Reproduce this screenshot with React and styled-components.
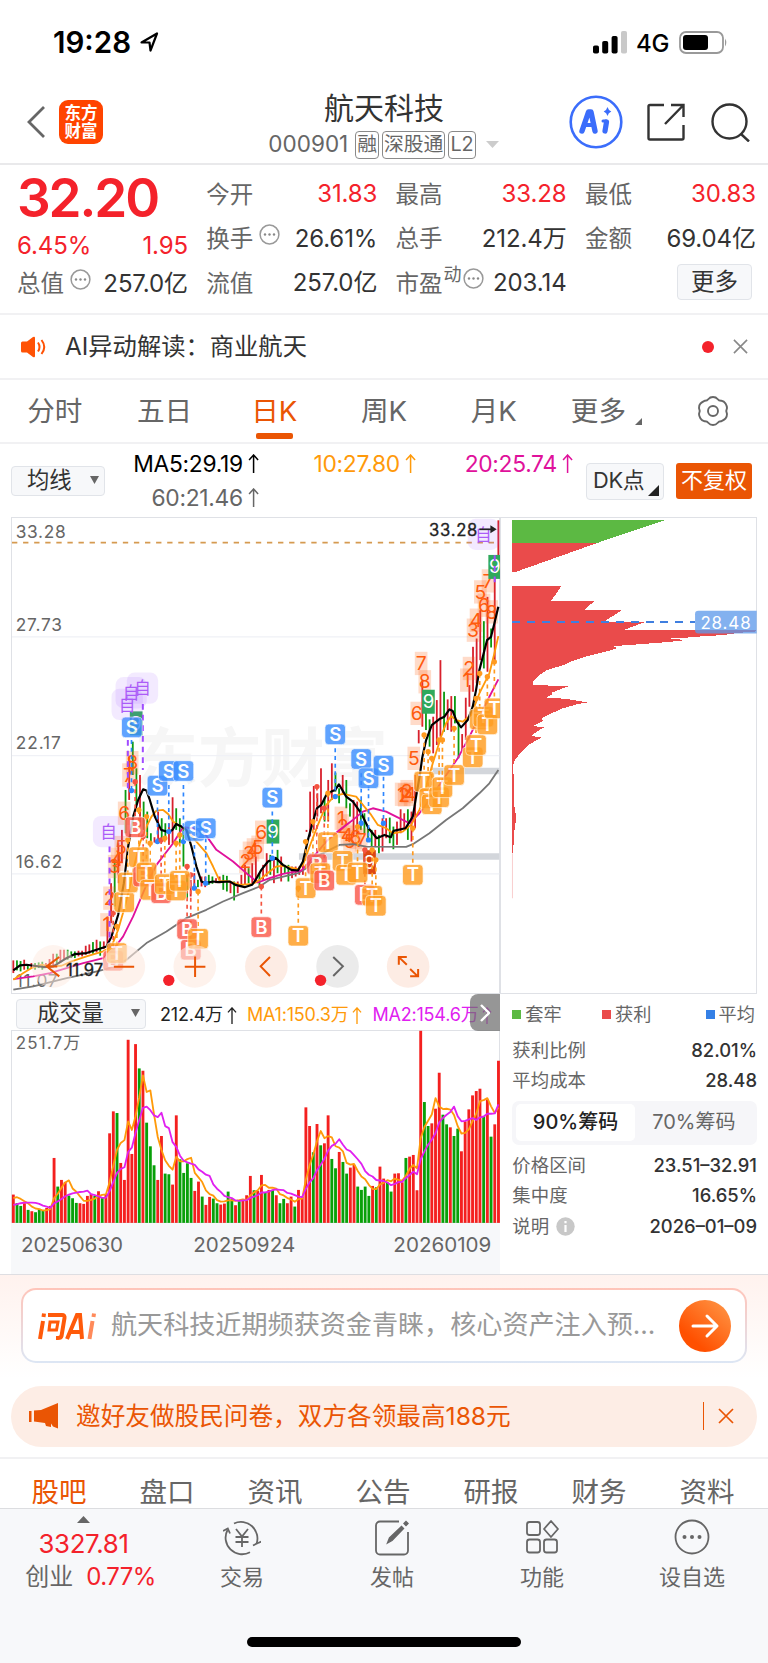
import React from "react";
import styled, { createGlobalStyle, css } from "styled-components";

const FONT = `Inter, "Noto Sans CJK SC", sans-serif`;
const C = {
  red: "#f4222b",
  orange: "#ea5504",
  text: "#333",
  sub: "#666",
  line: "#f1f1f3",
  pale: "#f7f8fa",
};

const Global = createGlobalStyle`
  * { box-sizing: border-box; }
  body { margin: 0; background: #fff; font-family: ${FONT}; color: ${C.text}; }
  svg { display: block; flex: none; }
  svg text { font-family: ${FONT}; }
`;

const Page = styled.div`
  width: 768px;
  height: 1663px;
  display: flex;
  flex-direction: column;
  overflow: hidden;
  background: #fff;
  line-height: 1;
  white-space: nowrap;
`;

/* ---------- status bar and header ---------- */

const StatusBar = styled.div`
  height: 84px;
  padding: 0 40px 0 53px;
  display: flex;
  align-items: center;
`;
const Clock = styled.div`
  font-size: 29.5px;
  font-weight: 600;
  color: #000;
  padding-top: 1px;
  width: 87px;
`;
const Network = styled.div`
  margin-left: auto;
  display: flex;
  align-items: center;
  font-size: 24px;
  font-weight: 500;
  letter-spacing: -0.3px;
  color: #000;
`;
const NetworkName = styled.span`
  margin: 3px 10px 0 9px;
  width: 33px;
`;

const Header = styled.header`
  height: 81px;
  border-bottom: 2px solid #e9e9eb;
  padding: 0 18px 0 27px;
  display: flex;
  align-items: center;
  justify-content: space-between;
`;
const HeaderSide = styled.div`
  display: flex;
  align-items: center;
  width: 206px;
  margin-top: ${(p) => (p.$end ? -3 : -3)}px;
  justify-content: ${(p) => (p.$end ? "flex-end" : "flex-start")};
`;
const AppLogo = styled.div`
  width: 44px;
  height: 44px;
  margin-left: 14px;
  border-radius: 9px;
  background: #ff4400;
  color: #fff;
  font-size: 16.5px;
  font-weight: 700;
  line-height: 18px;
  padding-top: 4px;
  text-align: center;
  white-space: normal;
`;
const TitleBlock = styled.div`
  display: flex;
  flex-direction: column;
  align-items: center;
  margin-left: -10px;
`;
const Title = styled.h1`
  margin: -2px 0 2px;
  padding-left: 1px;
  font-size: 30px;
  font-weight: 400;
  line-height: 42px;
`;
const CodeLine = styled.div`
  display: flex;
  align-items: center;
  gap: 3px;
  color: ${C.sub};
  font-size: 22.5px;
  height: 28px;
`;
const Code = styled.span`
  margin-right: 4px;
`;
const Badge = styled.span`
  height: 28px;
  border: 1.5px solid #8a8a8a;
  border-radius: 4px;
  padding: 0 1px;
  font-size: 19.8px;
  line-height: 25px;
`;

/* ---------- quote ---------- */

const Quote = styled.section`
  height: 150px;
  padding: 0 12px 0 17px;
  border-bottom: 2px solid ${C.line};
  display: grid;
  grid-template-columns: 171px 171px 171px 171px;
  column-gap: 18.3px;
`;
const QuoteColumn = styled.div`
  display: flex;
  flex-direction: column;
  padding-top: ${(p) => (p.$first ? 5 : 7)}px;
`;
const Price = styled.div`
  height: 54px;
  line-height: 56px;
  font-size: 53px;
  font-weight: 600;
  letter-spacing: -2.1px;
  color: ${C.red};
`;
const QuoteCell = styled.div`
  height: ${(p) => p.$h || 44.5}px;
  display: flex;
  align-items: center;
  justify-content: space-between;
  font-size: 24px;
  letter-spacing: -0.1px;
  color: ${(p) => (p.$red ? C.red : C.text)};
`;
const QuoteLabel = styled.span`
  display: flex;
  align-items: center;
  color: ${C.sub};
  font-size: 23.5px;
  letter-spacing: 0;
  svg { margin: -9px 0 0 6px; }
`;
const Dynamic = styled.sup`
  font-size: 18px;
  line-height: 1;
  margin: -16px -5px 0 1px;
`;
const MoreButton = styled.button`
  align-self: flex-end;
  width: 75px;
  height: 36px;
  margin: 3px 4px 0 0;
  padding: 0;
  border: 1.5px solid #e1e4e9;
  border-radius: 4px;
  background: ${C.pale};
  color: ${C.text};
  font: 23.5px/32px ${FONT};
`;

/* ---------- notice and period tabs ---------- */

const Notice = styled.div`
  height: 65px;
  padding: 0 20px 0 21px;
  display: flex;
  align-items: center;
  border-bottom: 2px solid ${C.line};
  font-size: 24.3px;
`;
const NoticeText = styled.span`
  margin-left: 19px;
  flex: 1;
`;
const Dot = styled.i`
  width: 12px;
  height: 12px;
  border-radius: 50%;
  background: ${C.red};
  margin-right: 19px;
`;

const Periods = styled.nav`
  height: 64px;
  display: flex;
  border-bottom: 2px solid ${C.line};
`;
const Period = styled.div`
  flex: 1;
  display: flex;
  flex-direction: column;
  align-items: center;
  padding-top: 11px;
  font-size: 27.6px;
  line-height: 40px;
  color: ${(p) => (p.$active ? C.orange : C.sub)};
  &::after {
    content: "";
    width: 37px;
    height: 6px;
    margin-top: 2px;
    border-radius: 2px;
    background: ${(p) => (p.$active ? C.orange : "transparent")};
  }
`;
const PeriodMore = styled.span`
  display: flex;
  align-items: flex-end;
  gap: 9px;
  padding-left: 6px;
  svg { margin-bottom: 6px; }
`;

/* ---------- moving average row ---------- */

const boxButton = css`
  border: 1.5px solid #e1e4e9;
  border-radius: 4px;
  background: ${C.pale};
  color: ${C.text};
  display: flex;
  align-items: center;
`;
const AverageRow = styled.div`
  height: 73px;
  padding: 0 16px 0 11px;
  display: flex;
  align-items: center;
`;
const Select = styled.div`
  ${boxButton}
  flex: none;
  width: ${(p) => p.$w}px;
  height: 30px;
  justify-content: space-between;
  padding: 0 5px 1px ${(p) => p.$pad}px;
  font-size: 22.3px;
  letter-spacing: 0;
`;
const Averages = styled.div`
  width: 468px;
  display: grid;
  grid-template-columns: 154px 157px 157px;
  font-size: 22.8px;
  line-height: 34px;
  letter-spacing: -0.3px;
`;
const Average = styled.span`
  display: flex;
  align-items: center;
  justify-content: flex-end;
  gap: 5px;
  color: ${(p) => p.$color};
`;
const DKButton = styled.div`
  ${boxButton}
  width: 78px;
  height: 37px;
  margin: 1px 12px 0 13px;
  padding: 0 4px 0 6px;
  font-size: 21.8px;
  letter-spacing: -0.3px;
  justify-content: space-between;
  svg { align-self: flex-end; margin: 0 0 3px -4px; }
`;
const AdjustButton = styled.div`
  width: 76px;
  height: 36px;
  margin-top: 1px;
  border-radius: 3px;
  background: ${C.orange};
  color: #fff;
  font-size: 22px;
  line-height: 34px;
  text-align: center;
`;

/* ---------- charts ---------- */

const Charts = styled.section`
  display: flex;
  height: 757px;
  padding: 0 11px;
`;
const MainColumn = styled.div`
  width: 490px;
  display: flex;
  flex-direction: column;
`;
const SideColumn = styled.div`
  width: 257px;
  display: flex;
  flex-direction: column;
`;
const Frame = styled.div`
  height: ${(p) => p.$h}px;
  box-shadow: inset 0 0 0 1px #dfe1e6;
  svg { width: 100%; height: 100%; }
`;
const VolumeHeader = styled.div`
  height: 36px;
  padding: 3px 0 0 5px;
  display: flex;
  align-items: center;
  position: relative;
  font-size: 18px;
  letter-spacing: -0.2px;
`;
const VolumeValue = styled.span`
  display: flex;
  align-items: center;
  gap: 4px;
  margin: 3px 0 0 ${(p) => p.$gap}px;
  color: ${(p) => p.$color};
`;
const Expand = styled.div`
  position: absolute;
  right: 0;
  top: 0;
  width: 30px;
  height: 37px;
  border-radius: 8px 0 0 8px;
  background: rgba(110, 110, 110, 0.72);
  display: flex;
  align-items: center;
  justify-content: center;
`;
const Dates = styled.div`
  height: 51px;
  background: ${C.pale};
  padding: 0 9px 6px 10px;
  display: flex;
  align-items: center;
  justify-content: space-between;
  font-size: 20.6px;
  color: ${C.sub};
  span:nth-child(2) { margin-right: 28px; }
`;

const Legend = styled.div`
  height: 41px;
  padding: 0 2px 0 12px;
  display: flex;
  align-items: center;
  justify-content: space-between;
  color: ${C.sub};
  font-size: 18.2px;
`;
const LegendItem = styled.span`
  display: flex;
  align-items: center;
  gap: 4px;
  margin-right: ${(p) => p.$shift || 0}px;
  &::before {
    content: "";
    width: 9px;
    height: 9px;
    background: ${(p) => p.$color};
  }
`;
const ChipRow = styled.div`
  height: ${(p) => p.$h || 30}px;
  padding-left: 12px;
  display: flex;
  align-items: center;
  justify-content: space-between;
  font-size: 18.4px;
  color: ${C.sub};
`;
const ChipLabel = styled.span`
  display: flex;
  align-items: center;
  gap: 7px;
`;
const ChipValue = styled.b`
  font-size: 18.4px;
  font-weight: 500;
  color: ${C.text};
`;
const Toggle = styled.div`
  height: 44px;
  margin: 6px 0 5px 12px;
  padding: 3px 4px 4px;
  display: flex;
  border-radius: 7px;
  background: #f6f6f9;
`;
const ToggleItem = styled.span`
  flex: 1;
  border-radius: 5px;
  font-size: 20px;
  line-height: 37px;
  text-align: center;
  ${(p) =>
    p.$on
      ? css`background: #fff; color: #222; font-weight: 500;`
      : css`color: ${C.sub};`}
`;

/* ---------- assistant and banner ---------- */

const Assistant = styled.section`
  height: 104px;
  border-top: 1px solid #dedee2;
  padding: 13px 21px 0;
  background: linear-gradient(#fff2ee, #fff);
`;
const AskBox = styled.div`
  height: 75px;
  border: 2px solid transparent;
  border-radius: 15px;
  background: linear-gradient(#fff, #fff) padding-box,
    linear-gradient(#ffc4b9, #dce6f4) border-box;
  display: flex;
  align-items: center;
  padding: 0 14px 0 15px;
`;
const AskText = styled.span`
  flex: 1;
  margin-left: 14px;
  font-size: 26.1px;
  color: #999;
`;
const Banner = styled.div`
  height: 61px;
  margin: 8px 11px 10px;
  padding: 0 23px 1px 18px;
  border-radius: 31px;
  background: #fdede5;
  color: ${C.orange};
  display: flex;
  align-items: center;
  font-size: 24.65px;
`;
const BannerText = styled.span`
  flex: 1;
  margin-left: 18px;
`;
const BannerRule = styled.i`
  width: 1.5px;
  height: 28px;
  margin-right: 14px;
  background: ${C.orange};
`;

/* ---------- bottom navigation ---------- */

const Sections = styled.nav`
  height: 52px;
  border-top: 2px solid ${C.line};
  border-bottom: 1.5px solid #dcdde0;
  padding: 13px 7px 0 5px;
  display: flex;
`;
const SectionTab = styled.span`
  flex: 1;
  text-align: center;
  font-size: 27.5px;
  line-height: 40px;
  height: 35px;
  color: ${(p) => (p.$active ? C.orange : C.sub)};
`;
const BottomBar = styled.footer`
  flex: 1;
  background: ${C.pale};
  display: flex;
  flex-direction: column;
  align-items: center;
`;
const Actions = styled.div`
  width: 768px;
  height: 128px;
  display: flex;
`;
const IndexBox = styled.div`
  width: 167px;
  padding: 7px 0 0 0;
  display: flex;
  flex-direction: column;
  align-items: center;
  font-size: 25.8px;
  letter-spacing: -0.3px;
  color: ${C.red};
`;
const IndexValue = styled.div`
  height: 41px;
  line-height: 42px;
`;
const IndexLine = styled.div`
  display: flex;
  align-items: center;
  gap: 13px;
  font-size: 24px;
  letter-spacing: -0.6px;
  margin: 0 0 0 14px;
  line-height: 26px;
  span { color: ${C.sub}; letter-spacing: 0; }
`;
const Action = styled.div`
  width: 150px;
  padding-top: 9px;
  display: flex;
  flex-direction: column;
  align-items: center;
  gap: 7px;
  color: ${C.sub};
  font-size: 22px;
  line-height: 28px;
`;
const HomeIndicator = styled.div`
  width: 274px;
  height: 10px;
  border-radius: 5px;
  background: #000;
`;

/* ---------- icons ---------- */

const More = () => (
  <svg width="21" height="21" viewBox="0 0 21 21">
    <circle cx="10.5" cy="10.5" r="9.4" fill="none" stroke="#999" strokeWidth="1.5" />
    <g fill="#888"><circle cx="6" cy="10.5" r="1.2" /><circle cx="10.5" cy="10.5" r="1.2" /><circle cx="15" cy="10.5" r="1.2" /></g>
  </svg>
);
const Cross = ({ size, color }) => (
  <svg width={size} height={size} viewBox="0 0 16 16" stroke={color} strokeWidth="1.7">
    <path d="M1 1 15 15M15 1 1 15" />
  </svg>
);
const Up = ({ h = 19 }) => (
  <svg width={h / 1.7} height={h} viewBox="0 0 11 19" fill="none" stroke="currentColor" strokeWidth="1.5">
    <path d="M5.5 19V1M1 6 5.5 1 10 6" />
  </svg>
);
const Caret = () => (
  <svg width="9" height="8" viewBox="0 0 9 8"><path d="M0 0H9L4.5 8Z" fill="#666" /></svg>
);
const Corner = ({ s, color }) => (
  <svg width={s} height={s} viewBox="0 0 10 10"><path d="M10 0V10H0Z" fill={color} /></svg>
);

/* ---------- candlestick chart: units are thirds of a pixel ---------- */

const STEP = 11.125;
const barX = (i) => 40 + i * STEP;

const CANDLES = `632-670r 632-662g 634-665g 630-660r 645-660g 640-655r 640-660g 638-655g 636-660g 640-655r 628-655r 612-650r
612-640g 600-640r 600-630r 600-630g 605-625g 605-625g 603-620r 603-620r 588-615r 584-612r 577-612g 570-608r 575-618g 575-598r
500-590r 400-520r 330-470g 280-400r 240-340r 120-250g 20-150r -25-75g 55-165g 75-230r 155-240g 185-265g 250-280g 262-278r
185-275r 205-265g 220-270g 220-285r 142-280r 175-240g 205-280g 232-350g 375-445g 390-440r 370-420r 390-412g 380-410r 380-412r
375-405g 380-402g 385-400r 380-400r 375-420g 378-425g 395-430r 395-452g 395-430r 375-410r 345-405r 355-400g 340-400r 320-400r
370-410g 345-390r 310-380r 315-375g 330-400r 300-370g 320-395r 345-370g 345-395g 350-385r 350-380r 350-375r 330-375r 240-246r
125-260r 108-240r 130-200r 55-190r 143-215g 90-215r 40-150r 68-125g 115-160g 75-130r 90-175g 160-200g 150-260r 155-260r
150-240g 190-250g 230-265g 240-290g 240-290r 255-310g 205-305r 205-265r 203-280g 230-298g 215-285r 178-250r 190-235r
178-270g 185-275r 75-235r -60--20r -210--70r -130--60g -92--10g -100-10r -150--15r -270--40r -175--55g -152--60r -162--55r
-162--80g -90-25g -48-0r -157--30r -195--130r -310--175r -335--200r -420--270r -387--245g -460--235r -365--308g -520--260r -690--585r`
  .split(/\s+/)
  .map((s) => {
    const m = s.match(/^(-?\d+)-(-?\d+)([rg])$/);
    return { hi: +m[1], lo: +m[2], up: m[3] === "r" };
  });
const CANDLE_STEP = (1497 - 40) / (CANDLES.length - 1);

const LINES = [
  ["#777", "40,720 100,710 200,685 270,670 330,655 380,630 440,580 500,545 560,505 620,480 670,455 730,430 780,410 810,390 895,370 920,355 950,320 990,300 1020,285 1060,283 1100,290 1220,291 1240,283 1290,250 1340,210 1390,175 1440,130 1470,100 1497,60"],
  ["#e0119b", "40,688 100,680 150,670 200,655 250,640 310,625 340,600 370,560 400,500 440,405 470,345 520,280 550,232 580,235 620,258 650,300 700,335 740,370 775,398 810,385 850,372 905,362 930,335 980,275 1020,240 1060,210 1090,185 1120,175 1160,185 1190,200 1230,220 1260,190 1290,150 1330,90 1375,25 1410,-40 1440,-100 1470,-160 1497,-212"],
  ["#ff9a0a", "40,690 70,670 95,655 125,645 150,650 185,648 215,635 260,620 310,605 335,590 355,540 375,470 390,410 405,340 420,280 440,230 455,200 470,182 490,180 505,192 520,215 535,225 560,240 590,275 620,310 640,350 660,393 690,395 720,405 760,402 780,390 810,365 830,350 850,348 895,358 910,345 930,290 955,225 980,165 1005,138 1030,132 1070,140 1090,165 1115,195 1135,225 1160,235 1180,250 1210,245 1235,225 1260,180 1280,110 1300,40 1325,-40 1340,-80 1355,-102 1370,-90 1390,-85 1415,-105 1440,-170 1470,-230 1485,-290 1497,-342"],
  ["#000", "40,662 60,647 80,645 130,652 160,650 195,628 225,613 260,610 290,600 320,590 335,560 355,495 372,400 385,290 400,200 415,150 430,118 440,122 450,150 465,200 484,240 507,247 518,240 529,222 545,230 560,240 575,290 590,350 605,395 618,400 640,395 655,397 690,395 707,405 735,412 757,405 768,390 785,360 805,335 828,324 850,345 875,360 895,362 910,335 925,270 940,215 952,175 965,165 980,135 995,125 1007,120 1018,103 1040,140 1060,155 1085,190 1107,235 1132,265 1155,255 1174,262 1182,243 1218,235 1240,200 1250,140 1262,70 1268,25 1280,-30 1297,-75 1320,-93 1335,-100 1350,-122 1360,-117 1372,-85 1385,-68 1405,-90 1420,-130 1430,-180 1440,-240 1463,-330 1475,-340 1485,-380 1497,-430"],
];

const STEMS = {
  "#2d86ff": [[395, -30, 122], [473, 150, 275], [507, 105, 245], [551, 105, 275], [584, 285, 415], [618, 265, 400], [818, 185, 325], [1007, -5, 140], [1085, 70, 220], [1107, 110, 270], [1152, 80, 220]],
  "#f4533f": [[340, 490, 600], [406, 95, 210], [430, 260, 350], [484, 270, 410], [562, 350, 510], [573, 375, 570], [785, 410, 500], [952, 110, 320], [974, 175, 365], [1096, 300, 410]],
  "#ff9a1f": [[384, 270, 375], [417, 180, 300], [440, 200, 350], [451, 280, 400], [495, 265, 385], [529, 280, 400], [540, 255, 370], [595, 425, 540], [351, 530, 590], [896, 415, 530], [918, 275, 390], [940, 215, 340], [985, 130, 260], [1074, 230, 350], [1118, 300, 420], [1129, 330, 450], [1240, 235, 350], [1274, -45, 70], [1286, 5, 115], [1297, 25, 140], [1319, -30, 120], [1329, -30, 100], [1364, -65, 50], [1430, -155, -40], [1441, -230, -120], [1464, -220, -100], [1485, -265, -150]],
};
const PURPLE_STEMS = [[329, 290, 600], [384, -30, 120], [429, -138, 60], [1486, -585, -500]];

const TAGS = [
  ["B", 340, 633], ["T", 351, 610], ["T", 373, 457], ["T", 384, 398], ["B", 406, 232], ["T", 417, 322], ["B", 430, 380], ["T", 440, 368],
  ["T", 451, 420], ["B", 484, 430], ["T", 495, 403], ["T", 529, 422], ["T", 540, 393], ["B", 562, 538], ["B", 573, 600], ["T", 595, 567],
  ["B", 785, 532], ["T", 896, 558], ["T", 918, 415], ["T", 985, 277], ["B", 952, 343], ["T", 962, 370], ["B", 974, 392],
  ["T", 1029, 333], ["T", 1040, 375], ["T", 1074, 368], ["B", 1096, 435], ["T", 1118, 438], ["T", 1129, 468], ["T", 1240, 375],
  ["T", 1274, 95], ["T", 1290, 145], ["T", 1297, 163], ["T", 1319, 142], ["T", 1329, 112], ["T", 1364, 75], ["T", 1420, 22], ["T", 1430, -15],
  ["T", 1441, -92], ["T", 1452, -100], ["T", 1464, -77], ["T", 1485, -125],
  ["S", 396, -68], ["S", 473, 107], ["S", 507, 63], ["S", 551, 63], ["S", 584, 243], ["S", 618, 235], ["S", 818, 143], ["S", 1007, -47],
  ["S", 1085, 27], ["S", 1107, 85], ["S", 1152, 47],
];
const TAG_FILL = { S: "#3d8fff", B: "#fb5a4b", T: "#ff9d21" };

const COUNTS = [
  [1, 320, 525], [2, 329, 445], [3, 343, 350], [4, 352, 328], [5, 363, 293], [6, 373, 190], [7, 386, 75], [8, 397, 38],
  [2, 737, 335], [3, 748, 310], [4, 760, 300], [5, 774, 292], [6, 785, 247],
  [1, 1024, 205], [2, 1030, 228], [4, 1042, 255], [5, 1050, 275], [6, 1068, 262], [7, 1085, 270],
  [1, 1205, 133], [2, 1214, 135], [3, 1222, 125], [4, 1232, 133], [5, 1243, 25], [6, 1252, -110], [7, 1265, -260], [8, 1276, -205],
  [1, 1401, -210], [2, 1409, -245], [3, 1421, -360], [4, 1430, -390], [5, 1443, -475], [6, 1454, -435], [7, 1466, -508], [8, 1477, -415],
];
const NINES = [[409, -80, "#2fa95c"], [820, 245, "#2fa95c"], [1110, 337, "#dd4712"], [1287, -145, "#2fa95c"], [1486, -550, "#2fa95c"]];
const AUTO = [[382, -137], [394, -172], [428, -186], [326, 245], [1452, -648]];

const PriceChart = () => (
  <svg viewBox="33 -699 1470 1431">
    <text x="405" y="92" fontSize="190" fontWeight="700" fill="#f6f6f6" textLength="760">东方财富</text>
    <g stroke="#f0f1f6" strokeWidth="4"><path d="M36-340H1500M36 17H1500M36 372H1500" /></g>
    <path d="M36-623H1485" stroke="#d59a50" strokeWidth="5" strokeDasharray="16 17.3" />
    <path d="M1300 63H1500M898 320H1500" stroke="#d3d6db" strokeWidth="20" />
    <g fill="#666" fontSize="52">
      <text x="47" y="-638" textLength="150">33.28</text>
      <text x="47" y="-358" textLength="139">27.73</text>
      <text x="47" y="-2" textLength="136">22.17</text>
      <text x="47" y="355" textLength="140">16.62</text>
      <text x="47" y="713" textLength="126">11.07</text>
    </g>
    {CANDLES.map((c, i) => (
      <rect key={i} x={40 + i * CANDLE_STEP - 2.7} y={c.hi} width="5.4" height={Math.max(c.lo - c.hi, 6)} fill={c.up ? "#d8202c" : "#0b9a10"} />
    ))}
    {COUNTS.map(([n, x, y], i) => (
      <g key={i}>
        <rect x={x - 19} y={y - 35} width="38" height="70" fill="#ff6a1f" opacity="0.24" />
        <text x={x} y={y + 20} fontSize="58" textAnchor="middle" fill="#ff5a0c">{n}</text>
      </g>
    ))}
    {NINES.map(([x, y, f], i) => (
      <g key={i}>
        <rect x={x - 19} y={y - 36} width="38" height="72" fill={f} />
        <text x={x} y={y + 19} fontSize="56" textAnchor="middle" fill="#fff">9</text>
      </g>
    ))}
    {LINES.map(([color, pts]) => (
      <polyline key={color} points={pts} fill="none" stroke={color} strokeWidth={color === "#000" ? 6.5 : 5.5} strokeLinejoin="round" />
    ))}
    {Object.entries(STEMS).map(([color, list]) =>
      list.map(([x, a, b]) => (
        <g key={color + x}>
          <path d={`M${x} ${a}V${b}`} stroke={color} strokeWidth="5" strokeDasharray="12 11" />
          <circle cx={x} cy={color === "#2d86ff" ? b : a} r="8" fill={color} />
        </g>
      ))
    )}
    {PURPLE_STEMS.map(([x, a, b]) => (
      <path key={x} d={`M${x} ${a}V${b}`} stroke="#a04bff" strokeWidth="6" strokeDasharray="17 15" />
    ))}
    {TAGS.map(([t, x, y], i) => (
      <g key={i} opacity="0.82">
        <rect x={x - 31} y={y - 31} width="62" height="62" rx="11" fill={TAG_FILL[t]} stroke="#fff" strokeWidth="3" strokeOpacity="0.7" />
        <text x={x} y={y + 20} fontSize="56" fontWeight="600" textAnchor="middle" fill="#fff">{t}</text>
      </g>
    ))}
    {AUTO.map(([x, y], i) => (
      <g key={i}>
        <rect x={x - 47} y={y - 47} width="94" height="94" rx="24" fill="#a55cff" opacity="0.13" />
        <text x={x} y={y + 19} fontSize="50" textAnchor="middle" fill="#ac5cf7">自</text>
      </g>
    ))}
    <text x="1289" y="-644" fontSize="50" fill="#222" stroke="#222" strokeWidth="1" textLength="145">33.28</text>
    <path d="M1440-663H1480" stroke="#222" strokeWidth="5" />
    <path d="M1473-675 1492-663 1473-651Z" fill="#222" />
    <g fill="#fde9df" fillOpacity="0.85">
      <circle cx="160" cy="650" r="64" fillOpacity="0.5" /><circle cx="372" cy="650" r="64" fillOpacity="0.6" />
      <circle cx="585" cy="650" r="64" fillOpacity="0.6" /><circle cx="800" cy="650" r="64" /><circle cx="1226" cy="650" r="64" />
    </g>
    <circle cx="1014" cy="650" r="64" fill="#ebebeb" />
    <text x="198" y="679" fontSize="50" fill="#222" stroke="#222" strokeWidth="1" textLength="112">11.97</text>
    <g fill="none" stroke={C.orange} strokeWidth="6">
      <path d="M178 622 140 650 178 680M140 650H172" />
      <path d="M342 651H403M555 651H617M586 620V682" />
      <path d="M811 622 783 650 811 679" />
      <path d="M1198 645V622H1222M1199 623 1222 645M1256 658V680H1232M1232 658 1255 680" />
    </g>
    <path d="M1001 622 1030 650 1001 679" fill="none" stroke="#666" strokeWidth="6" />
    <g fill={C.red}><circle cx="507" cy="692" r="17" /><circle cx="963" cy="692" r="17" /></g>
  </svg>
);

/* ---------- chip distribution ---------- */

const ChipChart = () => (
  <svg viewBox="0 21 771 1431" shapeRendering="crispEdges">
    <path d="M36 30H495L295 97H36Z" fill="#5cb943" />
    <g fill="#ea4b4b">
      <path d="M36 97H295L50 184H36Z" />
      <path d="M36 227 185 227 153 273 283 273 252 300 366 300 313 334 432 337 375 358 768 360 768 364 718 368 668 375 615 378 565 382 513 385 557 390 503 396 448 400 395 404 340 408 353 414 320 424 256 440 212 455 190 465 140 480 115 497 98 515 98 525 209 528 185 536 155 548 158 553 137 562 195 566 228 571 262 577 230 583 185 596 155 610 127 624 128 634 98 648 133 652 110 665 94 678 125 682 85 705 60 730 45 750 39 768 41 800 41 870 45 905 48 915 47 935 43 965 41 1000 38 1030H36Z" />
      <path d="M36 1030H38V1165H36Z" opacity="0.4" shapeRendering="auto" />
    </g>
    <path d="M36 336H586" stroke="#3f7fe0" strokeWidth="6" strokeDasharray="24 20.6" />
    <path d="M596 302H771V370H596Q586 370 586 360V312Q586 302 596 302Z" fill="#5c98ea" opacity="0.76" shapeRendering="auto" />
    <text x="602" y="355" fontSize="51" fill="#fff" textLength="151">28.48</text>
  </svg>
);

/* ---------- volume chart ---------- */

const VOLUMES = `614r 640g 648g 640r 660g 664r 667g 657g 661g 654r 648r 504r 590g 570r 576r 617g 625g 639g 640r 642r 618r 612r 618g 604r
622g 612r 430r 364r 369g 519r 570r 149r 492r 162r 235g 242r 398g 469g 526g 570r 438r 551g 553g 584r 376r 508g 549g 520g 564g 603r 575r
620g 645r 621r 626g 640g 644r 641r 605g 628g 646r 634g 628r 616r 558r 601g 603r 555r 608g 600r 600g 616r 640g 627g 640r 620r 650g 600r
620r 352r 408r 487g 402r 466g 460r 376r 507g 535g 486r 516g 551g 533r 525r 590g 600g 590g 618g 588r 592g 530r 566r 578g 605g 551r 550r
577r 504g 500r 495r 601r 122r 336g 408g 400r 356r 248r 374g 403g 412r 438g 416g 484r 394r 358r 316r 303r 296r 378g 328r 440g 403r 212r`
  .split(/\s+/)
  .map((s) => ({ y: parseInt(s, 10), up: s.endsWith("r") }));

const average = (n, lead) =>
  VOLUMES.map((_, i) => {
    const part = VOLUMES.slice(Math.max(0, i - n + 1), i + 1);
    const y = i < n - 1 ? lead[Math.min(i, lead.length - 1)] : part.reduce((a, v) => a + v.y, 0) / n;
    return `${barX(i)},${y.toFixed(1)}`;
  }).join(" ");

const VolumeChart = () => (
  <svg viewBox="33 120 1470 579">
    <text x="47" y="178" fontSize="51" fill="#666" textLength="194">251.7万</text>
    {VOLUMES.map((v, i) => (
      <rect key={i} x={barX(i) - 4.3} y={v.y} width="8.6" height={699 - v.y} fill={v.up ? "#f4201f" : "#08a008"} />
    ))}
    <g fill="none" strokeWidth="5.5" strokeLinejoin="round">
      <polyline points={average(5, [625, 622, 627, 634])} stroke="#ff9a0a" />
      <polyline points={average(10, [645, 643, 640, 638, 638, 638, 639, 642, 647])} stroke="#e020f0" />
    </g>
  </svg>
);

/* ---------- page ---------- */

const PERIODS = ["分时", "五日", "日K", "周K", "月K"];
const SECTIONS = ["股吧", "盘口", "资讯", "公告", "研报", "财务", "资料"];

const ACTIONS = [
  ["交易", <>
    <path d="M11 5.5A16.5 16.5 0 0 1 33.5 26M27 34.2A16.5 16.5 0 0 1 4.5 12" />
    <path d="M0 13 4.8 10.5 7 15.5M30 27.5 33.8 25.5 38.5 23.5" />
    <path d="M13 11 19 18.5 25 11M19 18.5V29M12.5 19H25.5M12.5 24H25.5" />
  </>],
  ["发帖", <>
    <path d="M26 3.5H7A4 4 0 0 0 3 7.5V32.5A4 4 0 0 0 7 36.5H31A4 4 0 0 0 35 32.5V14" />
    <path d="M14.500 25 16.500 20 28.500 8.500 30.500 10.500 19 22.500ZM31 5.500 33 3.500 35 5.500 33 7.500Z" fill={C.sub} strokeWidth="1.4" />
  </>],
  ["功能", <>
    <rect x="4" y="4" width="13" height="13" rx="2.5" /><rect x="4" y="21.5" width="13" height="13" rx="2.5" />
    <rect x="21" y="21.5" width="13" height="13" rx="2.5" /><path d="M28 3 35 11 28 19 21 11Z" strokeLinejoin="round" />
  </>],
  ["设自选", <>
    <circle cx="19" cy="19" r="16.5" />
    <g fill={C.sub} stroke="none"><circle cx="11.5" cy="19" r="2" /><circle cx="19" cy="19" r="2" /><circle cx="26.5" cy="19" r="2" /></g>
  </>],
];

const Row = ({ label, value, red, extra }) => (
  <QuoteCell $red={red}>
    <QuoteLabel>{label}{extra}</QuoteLabel>
    {value}
  </QuoteCell>
);

export default function App() {
  return (
    <Page>
      <Global />
      <StatusBar>
        <Clock>19:28</Clock>
        <svg width="19" height="20" viewBox="0 0 19 20" fill="none" stroke="#000" strokeWidth="2.2" strokeLinejoin="round">
          <path d="M1.5 10.5 17 1.5 10.5 18.5 9.5 10.5Z" />
        </svg>
        <Network>
          <svg width="34" height="23" viewBox="0 0 34 23">
            <rect x="0" y="14.5" width="6" height="8" rx="1.8" /><rect x="9.2" y="10" width="6" height="12.5" rx="1.8" />
            <rect x="18.6" y="5" width="6" height="17.5" rx="1.8" /><rect x="28" y="0" width="6" height="22.5" rx="1.8" fill="#c9c9c9" />
          </svg>
          <NetworkName>4G</NetworkName>
          <svg width="49" height="23" viewBox="0 0 49 23">
            <rect x="1" y="1" width="43" height="21" rx="6" fill="none" stroke="#999" strokeWidth="1.8" />
            <rect x="4" y="4" width="25" height="15" rx="3" />
            <path d="M46 7.5Q48.5 11.5 46 15.5Z" fill="#999" />
          </svg>
        </Network>
      </StatusBar>

      <Header>
        <HeaderSide>
          <svg width="18" height="32" viewBox="0 0 18 32" fill="none" stroke="#666" strokeWidth="2.8"><path d="M17 1 2 16 17 31" /></svg>
          <AppLogo>东方<br />财富</AppLogo>
        </HeaderSide>
        <TitleBlock>
          <Title>航天科技</Title>
          <CodeLine>
            <Code>000901</Code>
            <Badge>融</Badge><Badge>深股通</Badge><Badge>L2</Badge>
            <svg width="13" height="7" viewBox="0 0 13 7" style={{ marginLeft: 7 }}><path d="M0 0H13L6.5 7Z" fill="#ccc" /></svg>
          </CodeLine>
        </TitleBlock>
        <HeaderSide $end>
          <svg width="54" height="54" viewBox="0 0 54 54">
            <circle cx="27" cy="27" r="25.3" fill="none" stroke="#3b6dfb" strokeWidth="2.6" />
            <g fill="none" stroke="#3b6dfb" strokeLinecap="round" strokeLinejoin="round">
              <path d="M13 36 19.5 17H22L26 36" strokeWidth="5.4" /><path d="M17 30H24" strokeWidth="4" />
              <path d="M37.5 27 36 36" strokeWidth="5.2" /><path d="M34 26H37" strokeWidth="3" />
            </g>
            <path d="M38.5 12Q39.3 15.2 42.3 16.5 39.3 17.8 38.5 21 37.7 17.8 34.7 16.5 37.7 15.2 38.5 12Z" fill="#3b6dfb" />
          </svg>
          <svg width="38" height="38" viewBox="0 0 38 38" fill="none" stroke="#333" strokeWidth="2.4" style={{ margin: "0 26px 0 24px" }}>
            <path d="M17 2H3Q1.5 2 1.5 3.5V35Q1.5 36.5 3 36.5H35Q36.5 36.5 36.5 35V22M24 2H36.5V14M36 2.5 18 21" />
          </svg>
          <svg width="39" height="39" viewBox="0 0 39 39" fill="none" stroke="#333" strokeWidth="2.4"><circle cx="18.5" cy="18.5" r="17" /><path d="M30 31 38 38.5" /></svg>
        </HeaderSide>
      </Header>

      <Quote>
        <QuoteColumn $first>
          <Price>32.20</Price>
          <QuoteCell $red $h={43}><span>6.45%</span><span>1.95</span></QuoteCell>
          <QuoteCell $h={34}><QuoteLabel>总值<More /></QuoteLabel>257.0亿</QuoteCell>
        </QuoteColumn>
        <QuoteColumn>
          <Row label="今开" value="31.83" red />
          <Row label="换手" value="26.61%" extra={<More />} />
          <Row label="流值" value="257.0亿" />
        </QuoteColumn>
        <QuoteColumn>
          <Row label="最高" value="33.28" red />
          <Row label="总手" value="212.4万" />
          <Row label="市盈" value="203.14" extra={<><Dynamic>动</Dynamic><More /></>} />
        </QuoteColumn>
        <QuoteColumn>
          <Row label="最低" value="30.83" red />
          <Row label="金额" value="69.04亿" />
          <MoreButton>更多</MoreButton>
        </QuoteColumn>
      </Quote>

      <Notice>
        <svg width="25" height="22" viewBox="0 0 25 22">
          <path d="M0 7Q0 5.500 1.500 5.500H6L12 1Q14 0 14 2V20Q14 22 12 21L6 16.500H1.500Q0 16.500 0 15Z" fill="#ff5205" />
          <path d="M17 6.500Q20 11 17 15.500M20.500 4Q26 11 20.500 18" fill="none" stroke="#ff5205" strokeWidth="2" />
        </svg>
        <NoticeText>AI异动解读：商业航天</NoticeText>
        <Dot />
        <Cross size={15} color="#888" />
      </Notice>

      <Periods>
        {PERIODS.map((p) => <Period key={p} $active={p === "日K"}>{p}</Period>)}
        <Period><PeriodMore>更多<Corner s={7} color="#666" /></PeriodMore></Period>
        <Period>
          <svg width="32" height="40" viewBox="0 0 32 40" fill="none" stroke="#666" strokeWidth="1.9" strokeLinejoin="round">
            <path d="M11.500 8Q13 6 16 6T20.500 8Q22 10 24.500 9.800 27 10 28.500 12.500T30 17Q28.500 20 30 23 30 26 28.500 27.500T24.500 30.200Q22 30 20.500 32 19 34 16 34T11.500 32Q10 30 7.500 30.200 5 30 3.500 27.500T2 23Q3.500 20 2 17 2 14 3.500 12.500T7.500 9.800Q10 10 11.500 8Z" />
            <circle cx="16" cy="20" r="5" />
          </svg>
        </Period>
      </Periods>

      <AverageRow>
        <Select $w={94} $pad={15}>均线<Caret /></Select>
        <Averages>
          <Average $color="#000">MA5:29.19<Up /></Average>
          <Average $color="#ff9a0a">10:27.80<Up /></Average>
          <Average $color="#e0119b">20:25.74<Up /></Average>
          <Average $color="#666">60:21.46<Up /></Average>
        </Averages>
        <DKButton>DK点<Corner s={11} color="#222" /></DKButton>
        <AdjustButton>不复权</AdjustButton>
      </AverageRow>

      <Charts>
        <MainColumn>
          <Frame $h={477}><PriceChart /></Frame>
          <VolumeHeader>
            <Select $w={130} $pad={20}>成交量<Caret /></Select>
            <VolumeValue $gap={14} $color="#222">212.4万<Up h={17} /></VolumeValue>
            <VolumeValue $gap={10} $color="#ff9a0a">MA1:150.3万<Up h={17} /></VolumeValue>
            <VolumeValue $gap={10} $color="#e020f0">MA2:154.6万<Up h={17} /></VolumeValue>
            <Expand>
              <svg width="10" height="18" viewBox="0 0 10 18" fill="none" stroke="#fff" strokeWidth="2.4"><path d="M1 1 9 9 1 17" /></svg>
            </Expand>
          </VolumeHeader>
          <Frame $h={193}><VolumeChart /></Frame>
          <Dates><span>20250630</span><span>20250924</span><span>20260109</span></Dates>
        </MainColumn>
        <SideColumn>
          <Frame $h={477}><ChipChart /></Frame>
          <Legend>
            <LegendItem $color="#5cb943">套牢</LegendItem>
            <LegendItem $color="#ea4b4b" $shift={14}>获利</LegendItem>
            <LegendItem $color="#3580e6">平均</LegendItem>
          </Legend>
          <ChipRow>获利比例<ChipValue>82.01%</ChipValue></ChipRow>
          <ChipRow>平均成本<ChipValue>28.48</ChipValue></ChipRow>
          <Toggle><ToggleItem $on>90%筹码</ToggleItem><ToggleItem>70%筹码</ToggleItem></Toggle>
          <ChipRow>价格区间<ChipValue>23.51–32.91</ChipValue></ChipRow>
          <ChipRow>集中度<ChipValue>16.65%</ChipValue></ChipRow>
          <ChipRow $h={32}>
            <ChipLabel>
              说明
              <svg width="19" height="19" viewBox="0 0 19 19">
                <circle cx="9.5" cy="9.5" r="9.2" fill="#c8c8c8" /><path d="M9.500 4V6.300M9.500 8V15" stroke="#fff" strokeWidth="2.200" />
              </svg>
            </ChipLabel>
            <ChipValue>2026–01–09</ChipValue>
          </ChipRow>
        </SideColumn>
      </Charts>

      <Assistant>
        <AskBox>
          <svg width="59" height="28" viewBox="0 0 59 28" fill="none" stroke="#ff5a0a" strokeWidth="4">
            <path d="M5 9 2 27M6 1.500 5.500 5M10 3H24Q27 3 26.500 6L23.500 24Q23 26 20 26H18" />
            <path d="M12 10H20L18.500 18H11Z" strokeWidth="3" />
            <path d="M29 27 39 3H42L44 27M33 20H43" /><path d="M54.500 9 51.500 27M56 1.500 55.500 5" stroke="#ff8a5a" />
          </svg>
          <AskText>航天科技近期频获资金青睐，核心资产注入预…</AskText>
          <svg width="52" height="52" viewBox="0 0 52 52">
            <defs><linearGradient id="go" x1="1" y1="0" x2="0.3" y2="0.8"><stop stopColor="#ff9a4a" /><stop offset="1" stopColor="#ff5000" /></linearGradient></defs>
            <circle cx="26" cy="26" r="26" fill="url(#go)" />
            <path d="M14 26H37M28 16 38 26 28 36" fill="none" stroke="#fff" strokeWidth="3" strokeLinecap="round" strokeLinejoin="round" />
          </svg>
        </AskBox>
      </Assistant>

      <Banner>
        <svg width="29" height="26" viewBox="0 0 29 26" fill={C.orange}>
          <path d="M0 8H2.500V19H0ZM5 7.500 12 7 29 0V25.500L24 23.500 22 20.500V24L17 23 16 20 5 18.500Z" />
        </svg>
        <BannerText>邀好友做股民问卷，双方各领最高188元</BannerText>
        <BannerRule />
        <Cross size={16} color={C.orange} />
      </Banner>

      <Sections>
        {SECTIONS.map((s, i) => <SectionTab key={s} $active={i === 0}>{s}</SectionTab>)}
      </Sections>

      <BottomBar>
        <Actions>
          <IndexBox>
            <svg width="13" height="7" viewBox="0 0 13 7"><path d="M6.500 0 13 7H0Z" fill="#666" /></svg>
            <IndexValue>3327.81</IndexValue>
            <IndexLine><span>创业</span>0.77%</IndexLine>
          </IndexBox>
          {ACTIONS.map(([name, art]) => (
            <Action key={name}>
              <svg width="38" height="38" viewBox="0 0 38 38" fill="none" stroke={C.sub} strokeWidth="1.8">{art}</svg>
              {name}
            </Action>
          ))}
        </Actions>
        <HomeIndicator />
      </BottomBar>
    </Page>
  );
}
